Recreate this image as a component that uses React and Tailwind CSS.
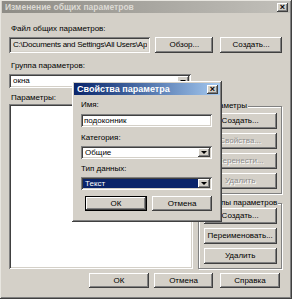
import React from "react";

const raised = "shadow-[inset_-1px_-1px_#404040,inset_1px_1px_#ffffff,inset_-2px_-2px_#808080,inset_2px_2px_#d4d0c8]";
const defBtn = "border border-black shadow-[inset_-1px_-1px_#404040,inset_1px_1px_#ffffff,inset_-2px_-2px_#808080]";
const sunken = "shadow-[inset_1px_1px_#808080,inset_-1px_-1px_#ffffff,inset_2px_2px_#404040,inset_-2px_-2px_#d4d0c8]";
const etched = "border border-[#808080] shadow-[1px_1px_#ffffff,inset_1px_1px_#ffffff]";

function Btn({ children, className = "", disabled, def }) {
  return (
    <div className={`flex items-center justify-center whitespace-nowrap bg-[#d4d0c8] ${def ? defBtn : raised} ${disabled ? "text-[#8d8d8d] [text-shadow:1px_1px_#ffffff]" : ""} ${className}`}>
      {children}
    </div>
  );
}

function Arrow() {
  return (
    <div className={`w-[12px] h-full bg-[#d4d0c8] ${raised} flex items-center justify-center`}>
      <div className="w-0 h-0 border-l-[3px] border-r-[3px] border-t-[3px] border-l-transparent border-r-transparent border-t-black" />
    </div>
  );
}

function Combo({ value, className = "", selected }) {
  return (
    <div className={`bg-white ${sunken} p-[2px] flex ${className}`}>
      <div className={`flex-1 flex items-center pl-[2px] ${selected ? "bg-[#0a246a] text-white" : ""}`}>{value}</div>
      <Arrow />
    </div>
  );
}

export default function App() {
  return (
    <div className="w-[294px] h-[302px] bg-white relative font-['Liberation_Sans',Arial,sans-serif] text-[8px] leading-[10px] text-black">
      <div className="w-[292px] h-[299px] bg-[#d4d0c8] flex flex-col p-[1px] shadow-[inset_-1px_-1px_#404040,inset_1px_1px_#e8e6e0,inset_-2px_-2px_#808080]">
        <div className="h-[12px] mx-[1px] bg-gradient-to-r from-[#8e8c86] to-[#c2c0ba] flex items-center justify-between pl-[3px] pr-[2px]">
          <span className="text-[#dcdad4] font-bold text-[8.5px]">Изменение общих параметров</span>
          <div className={`w-[11px] h-[9px] bg-[#d4d0c8] ${raised} flex items-center justify-center text-[9px] font-bold leading-none`}>×</div>
        </div>

        <div className="flex flex-col pl-[8px] pr-[9px]">
          <div className="mt-[11px] pl-[2px]">Файл общих параметров:</div>
          <div className="mt-[3px] flex h-[16px]">
            <div className={`w-[142px] bg-[#dcd9d2] ${sunken} flex items-center pl-[4px] pr-[2px] overflow-hidden whitespace-nowrap`}>
              <span className="overflow-hidden tracking-[-0.25px]">C:\Documents and Settings\All Users\Ap</span>
            </div>
            <Btn className="w-[58px] ml-[5px]">Обзор...</Btn>
            <Btn className="w-[62px] ml-[7px]">Создать...</Btn>
          </div>

          <div className="mt-[8px] pl-[2px]">Группа параметров:</div>
          <Combo value="окна" className="mt-[3px] h-[14px] w-[182px]" />

          <div className="mt-[5px] pl-[2px]">Параметры:</div>
          <div className="mt-[1px] flex">
            <div className={`w-[185px] h-[165px] bg-white ${sunken}`} />
            <div className="ml-[5px] flex flex-col w-[84px]">
              <div className={`relative mt-[2px] h-[88px] ${etched} flex flex-col items-center pt-[6px] gap-[4px]`}>
                <span className="absolute -top-[6px] left-[4px] bg-[#d4d0c8] px-[1px] whitespace-nowrap">Параметры</span>
                <Btn className="w-[73px] h-[16px]">Создать...</Btn>
                <Btn className="w-[73px] h-[16px]" disabled>Свойства...</Btn>
                <Btn className="w-[73px] h-[16px]" disabled>Перенести...</Btn>
                <Btn className="w-[73px] h-[16px]" disabled>Удалить</Btn>
              </div>
              <div className={`relative mt-[9px] h-[66px] ${etched} flex flex-col items-center pt-[4px] gap-[4px]`}>
                <span className="absolute -top-[6px] left-[4px] bg-[#d4d0c8] px-[1px] whitespace-nowrap">Группы параметров</span>
                <Btn className="w-[73px] h-[16px]">Создать...</Btn>
                <Btn className="w-[73px] h-[16px]">Переименовать...</Btn>
                <Btn className="w-[73px] h-[16px]">Удалить</Btn>
              </div>
            </div>
          </div>

          <div className="mt-[4px] flex justify-end pr-[2px]">
            <Btn className="w-[60px] h-[15px]">ОК</Btn>
            <Btn className="w-[59px] h-[15px] ml-[5px]">Отмена</Btn>
            <Btn className="w-[60px] h-[15px] ml-[7px]">Справка</Btn>
          </div>
        </div>
      </div>

      <div className={`absolute left-[72px] top-[81px] w-[150px] h-[141px] bg-[#d4d0c8] p-[2px] flex flex-col ${raised}`}>
        <div className="h-[12px] bg-gradient-to-r from-[#0a246a] to-[#a6caf0] flex items-center justify-between pl-[3px] pr-[2px]">
          <span className="text-white font-bold text-[9px]">Свойства параметра</span>
          <div className={`w-[11px] h-[9px] bg-[#d4d0c8] ${raised} flex items-center justify-center text-[9px] font-bold leading-none`}>×</div>
        </div>
        <div className="flex flex-col pl-[7px] pr-[8px]">
          <div className="mt-[5px]">Имя:</div>
          <div className={`mt-[4px] h-[13px] bg-white ${sunken} flex items-center pl-[3px]`}>подоконник</div>
          <div className="mt-[6px]">Категория:</div>
          <Combo value="Общие" className="mt-[3px] h-[13px]" />
          <div className="mt-[5px]">Тип данных:</div>
          <Combo value="Текст" selected className="mt-[3px] h-[13px]" />
          <div className="mt-[6px] flex pl-[4px]">
            <Btn def className="w-[62px] h-[15px]">ОК</Btn>
            <Btn className="w-[60px] h-[15px] ml-[5px]">Отмена</Btn>
          </div>
        </div>
      </div>
    </div>
  );
}
